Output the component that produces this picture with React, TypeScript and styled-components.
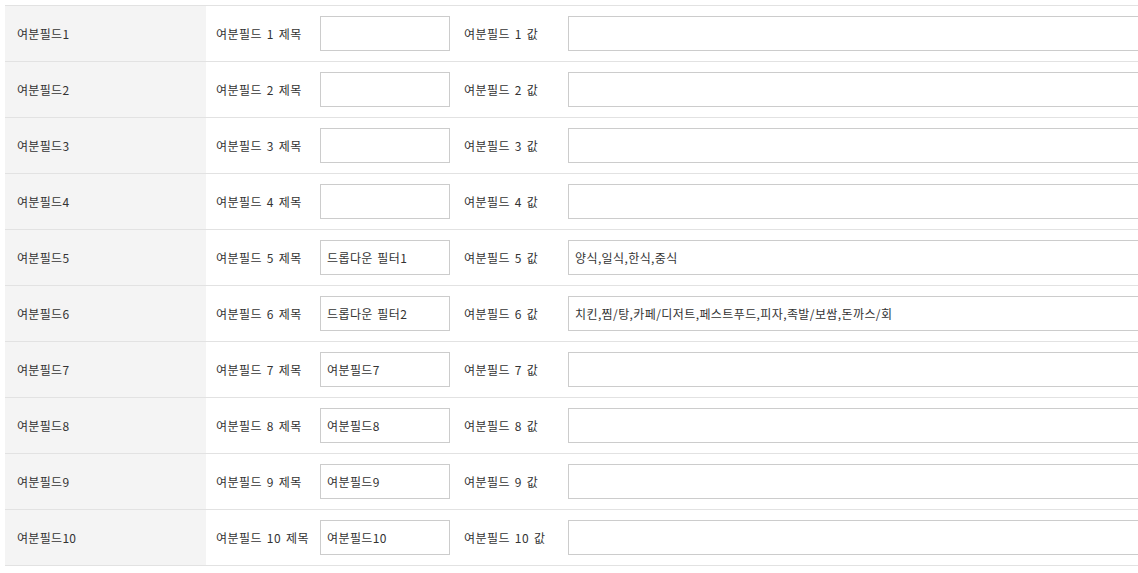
import React from "react";
import styled, { createGlobalStyle } from "styled-components";

const GlobalStyle = createGlobalStyle`
  html, body {
    margin: 0;
    padding: 0;
    background: #ffffff;
    overflow: hidden;
  }
  body {
    font-family: "Noto Sans CJK KR", "Noto Sans", "Liberation Sans", sans-serif;
    font-size: 12px;
    color: #333333;
  }
`;

const Page = styled.div`
  padding: 5px 0 0 5px;
  width: 1133px;
  overflow: hidden;
`;

const Table = styled.div`
  width: 1400px;
  border-top: 1px solid #e2e2e2;
`;

const Row = styled.div`
  display: grid;
  grid-template-columns: 201px 114px 130px 118px 600px;
  height: 55px;
  border-bottom: 1px solid #e2e2e2;
  align-items: center;
`;

const Head = styled.div`
  height: 100%;
  display: flex;
  align-items: center;
  padding-left: 12px;
  background: #f4f4f4;
  color: #333333;
  white-space: nowrap;
  letter-spacing: 0.3px;
`;

const Label = styled.div<{ $pad: number }>`
  padding-left: ${(p) => p.$pad}px;
  white-space: nowrap;
  color: #333333;
  letter-spacing: 0.5px;
  word-spacing: 1.5px;
`;

const Field = styled.input`
  box-sizing: border-box;
  width: 100%;
  height: 35px;
  margin: 0;
  padding: 0 6px;
  border: 1px solid #cccccc;
  border-radius: 0;
  background: #ffffff;
  font-family: "Noto Sans CJK KR", "Noto Sans", "Liberation Sans", sans-serif;
  font-size: 12px;
  letter-spacing: 0.4px;
  word-spacing: 1.5px;
  color: #333333;
  outline: none;
`;

type RowData = { title: string; value: string };

const rows: RowData[] = [
  { title: "", value: "" },
  { title: "", value: "" },
  { title: "", value: "" },
  { title: "", value: "" },
  { title: "드롭다운 필터1", value: "양식,일식,한식,중식" },
  {
    title: "드롭다운 필터2",
    value: "치킨,찜/탕,카페/디저트,페스트푸드,피자,족발/보쌈,돈까스/회",
  },
  { title: "여분필드7", value: "" },
  { title: "여분필드8", value: "" },
  { title: "여분필드9", value: "" },
  { title: "여분필드10", value: "" },
];

export default function App() {
  return (
    <>
      <GlobalStyle />
      <Page>
        <Table>
          {rows.map((r, i) => {
            const n = i + 1;
            return (
              <Row key={n}>
                <Head>여분필드{n}</Head>
                <Label $pad={10}>여분필드 {n} 제목</Label>
                <Field defaultValue={r.title} />
                <Label $pad={14}>여분필드 {n} 값</Label>
                <Field defaultValue={r.value} />
              </Row>
            );
          })}
        </Table>
      </Page>
    </>
  );
}
